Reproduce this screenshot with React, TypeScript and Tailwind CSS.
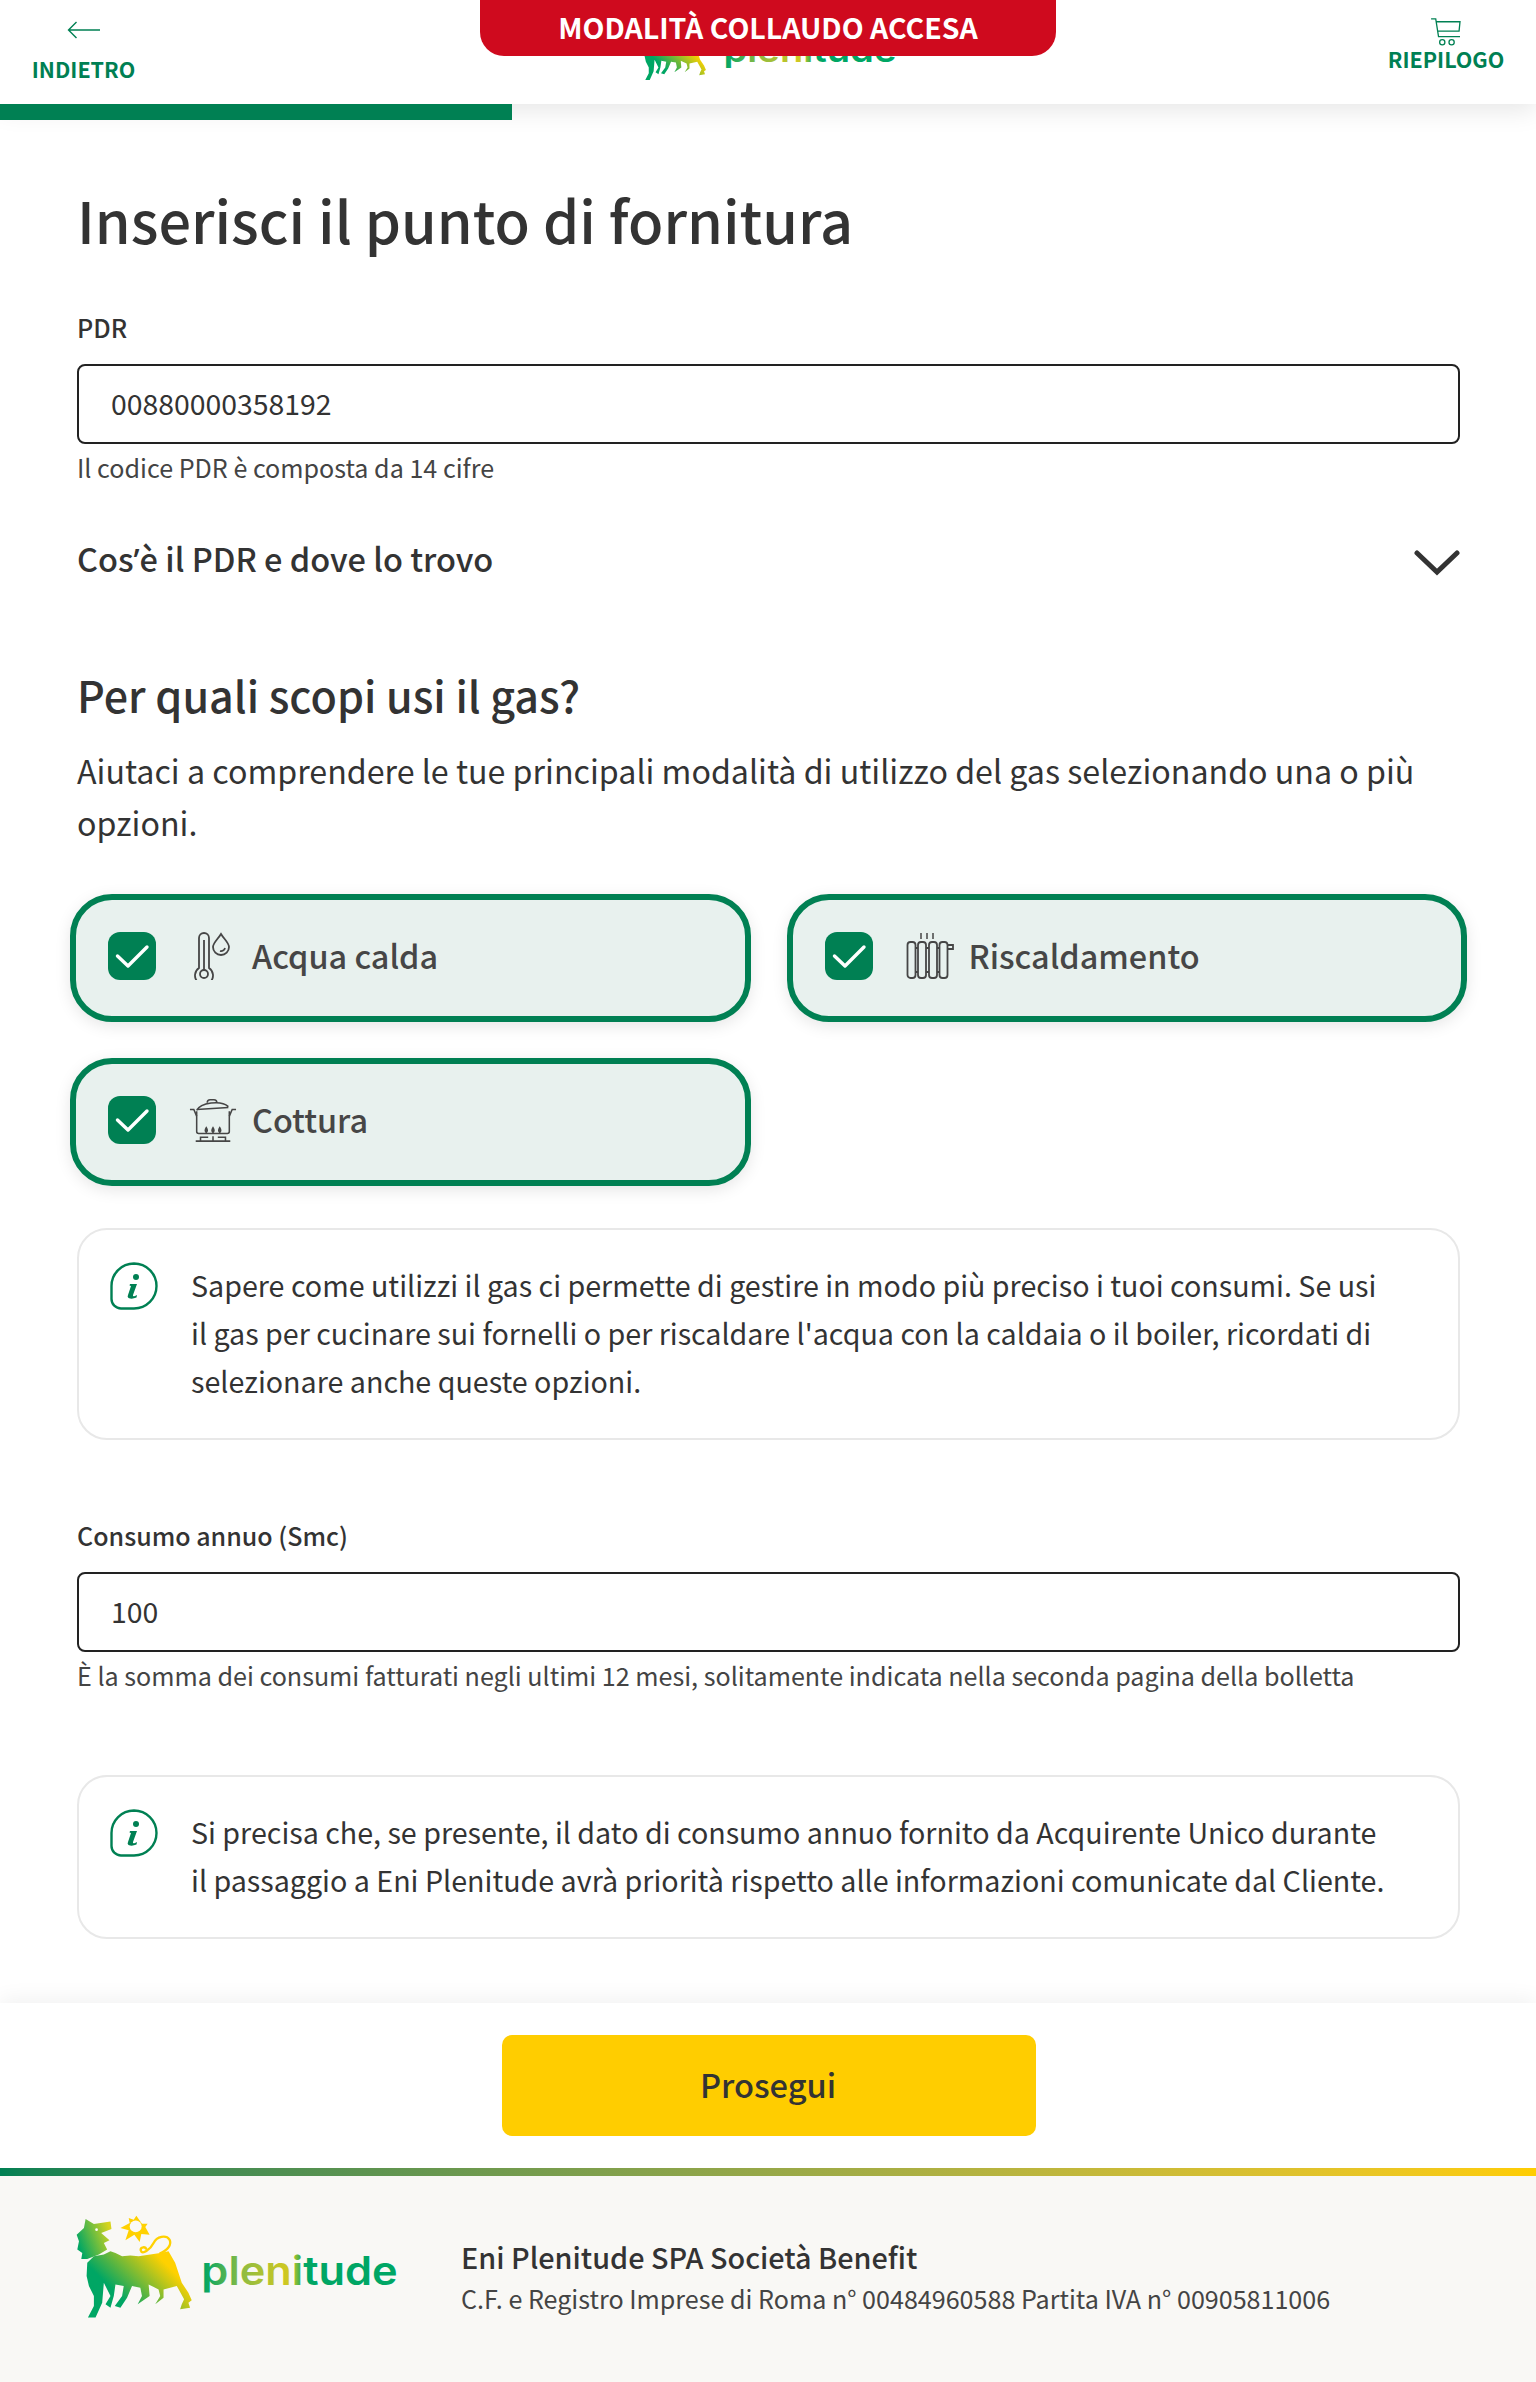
import React from "react";

const font = { fontFamily: '"Noto Sans CJK SC", "Noto Sans", sans-serif' };

const lionBody =
  "M80 190 L100 170 L130 165 L150 155 L165 160 L185 170 L210 168 L235 170 L270 165 L300 160 L325 155 L345 190 L365 250 L385 280 L395 303 L385 310 L390 325 L360 330 L365 315 L372 300 L350 260 L310 270 L310 295 L285 315 L300 290 L295 270 L265 255 L268 290 L232 315 L245 290 L240 265 L215 260 L200 295 L180 325 L163 320 L185 290 L190 260 L165 255 L160 290 L150 325 L135 315 L150 290 L130 250 L125 310 L105 355 L82 355 L100 320 L100 290 L85 260 L78 230 Z";

function LionShapes({ id }: { id: string }) {
  return (
    <>
      <defs>
        <linearGradient id={`${id}-body`} gradientUnits="userSpaceOnUse" x1="290" y1="165" x2="170" y2="285">
          <stop offset="0" stopColor="#ffd100" />
          <stop offset="1" stopColor="#00a664" />
        </linearGradient>
        <linearGradient id={`${id}-head`} gradientUnits="userSpaceOnUse" x1="50" y1="130" x2="150" y2="90">
          <stop offset="0" stopColor="#00a664" />
          <stop offset="1" stopColor="#d8d41c" />
        </linearGradient>
      </defs>
      <path
        d="M75 58 L100 73 L150 65 L153 88 L122 100 L147 122 L130 130 L140 150 L115 165 L80 178 L62 178 L65 160 L50 150 L55 125 L48 105 L70 85 Z"
        fill={`url(#${id}-head)`}
      />
      <circle cx="108" cy="90" r="4" fill="#fff" />
      <path d={lionBody} fill={`url(#${id}-body)`} />
      <path
        d="M298 162 C322 152 336 135 328 120 C318 105 290 110 280 130 C270 150 245 168 241 152 C240 141 256 140 258 150"
        fill="none"
        stroke="#ffd100"
        strokeWidth="7"
      />
      <path
        d="M228 48 L220 60 L205 55 L208 70 L180 85 L205 92 L195 122 L222 105 L238 127 L243 103 L268 105 L255 82 L262 72 L245 72 Z"
        fill="#ffd100"
      />
      <circle cx="226" cy="80" r="18" fill="#faf9f5" />
    </>
  );
}

function Wordmark({ id }: { id: string }) {
  return (
    <>
      <defs>
        <linearGradient id={`${id}-text`} gradientUnits="userSpaceOnUse" x1="432" y1="0" x2="1008" y2="0">
          <stop offset="0" stopColor="#00a664" />
          <stop offset="0.2" stopColor="#8fbc42" />
          <stop offset="0.46" stopColor="#d6c91e" />
          <stop offset="0.52" stopColor="#00a664" />
          <stop offset="1" stopColor="#00a664" />
        </linearGradient>
      </defs>
      <text
        x="424"
        y="258"
        fontSize="118"
        fontWeight="600"
        textLength="592"
        lengthAdjust="spacingAndGlyphs"
        fill={`url(#${id}-text)`}
        style={{ fontFamily: "Inter, sans-serif" }}
      >
        plenitude
      </text>
    </>
  );
}

function Check() {
  return (
    <span className="flex h-[48px] w-[48px] shrink-0 items-center justify-center rounded-[12px] bg-[#008053]">
      <svg viewBox="0 0 48 48" className="h-[48px] w-[48px]" fill="none" stroke="#fff" strokeWidth="3.4" strokeLinecap="round" strokeLinejoin="round">
        <path d="M9.5 24 L20 34 L39 15" />
      </svg>
    </span>
  );
}

function WaterIcon() {
  return (
    <svg viewBox="0 0 44 48" className="h-[48px] w-[44px]" fill="none" stroke="#464646" strokeWidth="1.8">
      <path d="M8 36 V6 a5 5 0 0 1 10 0 V36 a9 9 0 1 1 -10 0 Z" />
      <circle cx="13" cy="42" r="4" />
      <path d="M13 8 V38" />
      <path d="M30 2 C27 7 22 11 22 15 a8 8 0 0 0 16 0 C38 11 33 7 30 2 Z" />
      <path d="M29 19 a4 4 0 0 0 5 -3" />
    </svg>
  );
}

function HeaterIcon() {
  return (
    <svg viewBox="0 0 48 48" className="h-[48px] w-[48px]" fill="none" stroke="#464646" strokeWidth="1.8">
      <rect x="1.5" y="10" width="8" height="36" rx="3" />
      <rect x="12" y="10" width="8" height="36" rx="3" />
      <rect x="23" y="10" width="8" height="36" rx="3" />
      <rect x="33.5" y="10" width="8" height="36" rx="3" />
      <path d="M9.5 16 H12 M9.5 40 H12 M20 16 H23 M20 40 H23 M31 16 H33.5 M31 40 H33.5" />
      <path d="M41.5 13 H47 V17 H41.5" />
      <path d="M15 1 V7 M21 1 V7 M27 1 V7" strokeWidth="1.5" />
    </svg>
  );
}

function PotIcon() {
  return (
    <svg viewBox="0 0 50 50" className="h-[48px] w-[50px]" fill="none" stroke="#464646" strokeWidth="1.6">
      <path d="M8 16 V37 q0 2 2 2 H40 q2 0 2 -2 V16" />
      <path d="M8 14 L41 12 M8 15 C12 7 33 4 41 11" />
      <path d="M19 7 q0 -3 3 -3 h4 q3 0 3 3" />
      <path d="M1 14 H5 L8 21 M49 14 H45 L42 21" />
      <path d="M18 33 q-2 3 0 5 q2 -2 0 -5 Z M25 33 q-2 3 0 5 q2 -2 0 -5 Z M32 33 q-2 3 0 5 q2 -2 0 -5 Z" />
      <path d="M7 47 H43 M12 47 V43 H20 M38 47 V43 H30 M25 47 V42" />
    </svg>
  );
}

function InfoIcon() {
  return (
    <svg viewBox="0 0 48 48" className="h-[48px] w-[48px] shrink-0">
      <path
        d="M24 1.5 A22.5 22.5 0 0 1 24 46.5 H11 A9.5 9.5 0 0 1 1.5 37 V24 A22.5 22.5 0 0 1 24 1.5 Z"
        fill="none"
        stroke="#008053"
        strokeWidth="2.4"
      />
      <circle cx="26" cy="15" r="3" fill="#008053" />
      <path d="M20 22 H27 L23 33 Q22.5 35 25 34 L27 33 L26.5 35.5 Q22 37.5 18.5 36 Q17 35 18 33 L21 24 L19.5 23.5 Z" fill="#008053" />
    </svg>
  );
}

function Option({ icon, label }: { icon: React.ReactNode; label: string }) {
  return (
    <div className="flex h-[128px] items-center rounded-[42px] border-[6px] border-[#008053] bg-[#e8f1ee] pb-[4px] pl-[32px] shadow-[0_4px_16px_rgba(0,0,0,0.1)]">
      <Check />
      <span className="ml-[32px] flex w-[50px] shrink-0 items-center justify-center">{icon}</span>
      <span className="mb-[2px] ml-[14px] text-[32.4px] font-medium text-[#464646]">{label}</span>
    </div>
  );
}

function Field({ label, value, help }: { label: string; value: string; help: string }) {
  return (
    <div>
      <div className="text-[25px] leading-[32px] font-medium text-[#333]">{label}</div>
      <div className="mt-[21px] flex h-[80px] items-center rounded-[8px] border-2 border-[#222] pb-[2px] pl-[32px] text-[28.4px] text-[#333]">
        {value}
      </div>
      <div className="mt-[6px] text-[25.1px] leading-[34px] text-[#444]">{help}</div>
    </div>
  );
}

function InfoBox({ text }: { text: string }) {
  return (
    <div className="flex gap-[33px] rounded-[30px] border-2 border-[#e8e8e8] pt-[32px] pr-[66px] pb-[32px] pl-[31px]">
      <InfoIcon />
      <p className="mt-[-1px] mb-[1px] text-[28.65px] leading-[48px] text-[#333]">{text}</p>
    </div>
  );
}

export default function App() {
  return (
    <div style={font} className="flex min-h-[2382px] flex-col bg-white text-[#333]">
      <header className="relative z-10 flex h-[104px] items-start justify-between bg-white shadow-[0_6px_24px_rgba(0,0,0,0.1)]">
        <div className="ml-[33px] flex w-[101px] flex-col items-center pt-[20px]">
          <svg viewBox="0 0 34 20" className="h-[20px] w-[34px]" fill="none" stroke="#008053" strokeWidth="1.4">
            <path d="M33 10 H2 M9.5 2 L1.5 10 L9.5 18" />
          </svg>
          <span className="mt-[14px] text-[21.5px] leading-[30px] font-bold text-[#008053]">INDIETRO</span>
        </div>
        <div className="ml-[10px] flex h-[82px] items-end">
          <svg viewBox="40 40 370 325" className="h-[63px] w-[72px]">
            <LionShapes id="top" />
          </svg>
          <svg viewBox="432 150 576 130" className="mb-[14px] ml-[15px] h-[38px] w-[172px]">
            <Wordmark id="top" />
          </svg>
        </div>
        <div className="mr-[33px] flex w-[114px] flex-col items-center pt-[18px]">
          <svg viewBox="0 0 34 30" className="h-[28px] w-[32px]" fill="none" stroke="#008053" strokeWidth="1.4">
            <path d="M1 1 H6 L9 20 H32 M7 4 H32 L31 14 H8" />
            <circle cx="13" cy="26" r="2.8" />
            <circle cx="23" cy="26" r="2.8" />
          </svg>
          <span className="mt-[-2px] text-[21.5px] leading-[30px] font-bold text-[#008053]">RIEPILOGO</span>
        </div>
        <div className="absolute top-0 left-[480px] flex h-[56px] w-[576px] items-center justify-center rounded-b-[24px] bg-[#cf0a1e] pb-[2px] text-[28.5px] font-bold text-white">
          MODALITÀ COLLAUDO ACCESA
        </div>
      </header>
      <div className="relative z-10 h-[16px] w-[512px] bg-[#008053]" />

      <main className="flex-1 pr-[76px] pl-[77px]">
        <h1 className="mt-[64px] text-[57.6px] leading-[70px] font-medium text-[#333]">Inserisci il punto di fornitura</h1>
        <div className="mt-[57px]">
          <Field label="PDR" value="00880000358192" help="Il codice PDR è composta da 14 cifre" />
        </div>
        <div className="mt-[51px] flex items-center justify-between">
          <span className="text-[32.5px] leading-[46px] font-medium text-[#333]">
            Cos<span className="font-['Noto_Sans']">’</span>è il PDR e dove lo trovo
          </span>
          <svg viewBox="0 0 46 26" className="mt-[8px] h-[26px] w-[46px]" fill="none" stroke="#333" strokeWidth="5" strokeLinecap="round" strokeLinejoin="miter">
            <path d="M3 3 L23 22 L43 3" />
          </svg>
        </div>
        <h2 className="mt-[81px] text-[43px] leading-[60px] font-medium text-[#333]">Per quali scopi usi il gas?</h2>
        <p className="mt-[20px] text-[32.2px] leading-[52px] text-[#333]">
          Aiutaci a comprendere le tue principali modalità di utilizzo del gas selezionando una o più opzioni.
        </p>
        <div className="mt-[46px] mr-[-7px] ml-[-7px] grid grid-cols-2 gap-x-[36px] gap-y-[36px]">
          <Option icon={<WaterIcon />} label="Acqua calda" />
          <Option icon={<HeaterIcon />} label="Riscaldamento" />
          <Option icon={<PotIcon />} label="Cottura" />
        </div>
        <div className="mt-[42px]">
          <InfoBox text="Sapere come utilizzi il gas ci permette di gestire in modo più preciso i tuoi consumi. Se usi il gas per cucinare sui fornelli o per riscaldare l'acqua con la caldaia o il boiler, ricordati di selezionare anche queste opzioni." />
        </div>
        <div className="mt-[79px]">
          <Field
            label="Consumo annuo (Smc)"
            value="100"
            help="È la somma dei consumi fatturati negli ultimi 12 mesi, solitamente indicata nella seconda pagina della bolletta"
          />
        </div>
        <div className="mt-[83px]">
          <InfoBox text="Si precisa che, se presente, il dato di consumo annuo fornito da Acquirente Unico durante il passaggio a Eni Plenitude avrà priorità rispetto alle informazioni comunicate dal Cliente." />
        </div>
      </main>

      <div className="flex h-[165px] justify-center bg-white pt-[32px] shadow-[0_-4px_20px_rgba(0,0,0,0.06)]">
        <button className="ml-[2px] h-[101px] w-[534px] rounded-[10px] bg-[#ffcd00] pr-[2px] pb-[2px] text-[32.6px] font-medium text-[#333]">Prosegui</button>
      </div>
      <div className="h-[8px] bg-gradient-to-r from-[#008053] to-[#ffcd00]" />
      <footer className="flex h-[206px] items-start bg-[#f9f8f5] pt-[37px] pl-[74px]">
        <svg viewBox="40 40 980 325" className="h-[108px] w-[325px]">
          <LionShapes id="bottom" />
          <Wordmark id="bottom" />
        </svg>
        <div className="ml-[62px] pt-[23px]">
          <div className="text-[28.8px] leading-[42px] font-medium text-[#333]">Eni Plenitude SPA Società Benefit</div>
          <div className="text-[25.1px] leading-[40px] text-[#444]">
            C.F. e Registro Imprese di Roma n° 00484960588 Partita IVA n° 00905811006
          </div>
        </div>
      </footer>
    </div>
  );
}
